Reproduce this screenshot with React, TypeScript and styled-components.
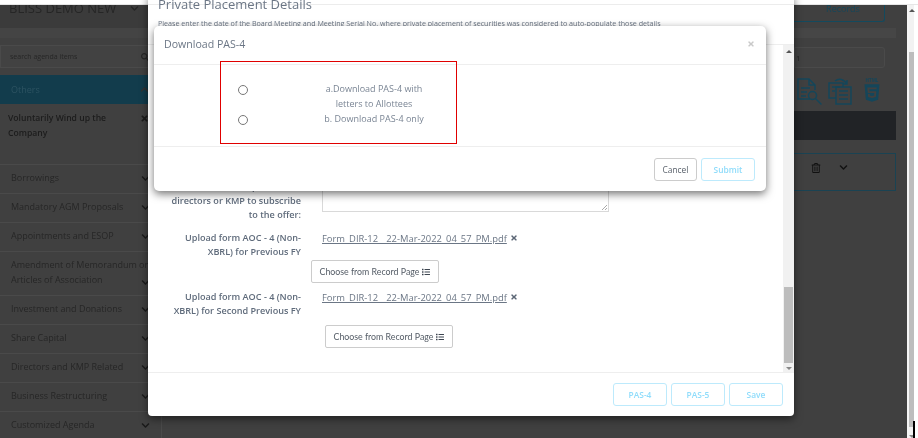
import React from "react";
import styled, { createGlobalStyle } from "styled-components";
import { FaChevronDown, FaChevronUp, FaTimes, FaSearch, FaList, FaRegTrashAlt, FaHtml5 } from "react-icons/fa";

const Global = createGlobalStyle`
  html, body { margin: 0; padding: 0; background: #fff; }
  * { box-sizing: border-box; }
  body { font-family: "Open Sans", "Liberation Sans", sans-serif; }
`;

const Page = styled.div`
  position: relative;
  width: 918px;
  height: 438px;
  overflow: hidden;
  display: flex;
  flex-direction: column;
  background: #fff;
  filter: blur(0.35px);
`;
const TopStrip = styled.div`
  height: 5px;
  flex: none;
  background: #fff;
  border-bottom: 1px solid #e6e6e6;
`;
const Desktop = styled.div`
  flex: 1;
  display: flex;
  min-height: 0;
`;
const Sidebar = styled.aside`
  width: 162px;
  flex: none;
  background: #404040;
  border-right: 1px solid #4a4a4a;
  display: flex;
  flex-direction: column;
  overflow: hidden;
`;
const Brand = styled.div`
  height: 23px;
  flex: none;
  background: #3b3b3b;
  display: flex;
  align-items: flex-start;
  gap: 14px;
  padding-left: 9px;
  color: #262626;
  font-size: 13px;
  line-height: 6px;
  svg { margin-top: -1px; }
`;
const Band = styled.div`
  height: 10px;
  flex: none;
  background: #444;
`;
const SearchBox = styled.div`
  height: 23px;
  margin-top: 7px;
  flex: none;
  display: flex;
  align-items: center;
  justify-content: space-between;
  padding: 0 11px 0 9px;
  background: #424242;
  border: 1px solid #4a4a4a;
  color: #262626;
  font-size: 7px;
`;
const ActiveItem = styled.div`
  margin-top: 7px;
  height: 29px;
  flex: none;
  display: flex;
  align-items: center;
  justify-content: space-between;
  padding: 0 12px 0 11px;
  background: #123c4c;
  color: #2c5261;
  font-size: 9px;
  svg { color: #333; }
`;
const SubItem = styled.div`
  height: 60px;
  flex: none;
  display: flex;
  justify-content: space-between;
  padding: 7px 12px 0 8px;
  color: #1c1c1c;
  font-size: 8.6px;
  font-weight: 600;
  line-height: 15px;
  span { width: 110px; }
  svg { margin-top: 3px; }
`;
const NavItem = styled.div<{ $tall?: boolean }>`
  height: ${(p) => (p.$tall ? 44 : 29)}px;
  flex: none;
  display: flex;
  align-items: ${(p) => (p.$tall ? "flex-end" : "center")};
  justify-content: space-between;
  padding: ${(p) => (p.$tall ? "0 11px 8px 11px" : "0 11px 1px")};
  border-top: 1px solid #4a4a4a;
  color: #262626;
  font-size: 9px;
  line-height: 14.5px;
  white-space: nowrap;
  svg { color: #1a1a1a; flex: none; }
`;
const NavLabel = styled.span`
  width: 125px;
  white-space: nowrap;
`;
const Content = styled.main`
  flex: 1;
  min-width: 0;
  background: #404040;
  display: flex;
  flex-direction: column;
  align-items: flex-end;
  padding-right: 11px;
`;
const RightColumn = styled.div`
  width: 102px;
  display: flex;
  flex-direction: column;
`;
const RecordsButton = styled.div`
  width: 91px;
  height: 17px;
  flex: none;
  border: 1px solid #134a5e;
  border-top: 0;
  border-left: 0;
  border-radius: 0 0 3px 0;
  color: #14465a;
  font-size: 9px;
  line-height: 8px;
  text-align: center;
  padding-left: 8px;
`;
const WideBand = styled.div`
  height: 10px;
  margin-top: 6px;
  background: #464646;
`;
const ValueInput = styled.div`
  width: 91px;
  height: 21px;
  margin-top: 9px;
  background: #424242;
  border: 1px solid #4a4a4a;
  border-radius: 0 3px 3px 0;
  color: #262626;
  font-size: 8px;
  line-height: 20px;
  padding-left: 1px;
`;
const IconRow = styled.div`
  height: 27px;
  margin-top: 10px;
  display: flex;
  gap: 5px;
  padding-left: 3px;
  color: #14465a;
`;
const Html5 = styled.div`
  display: flex;
  flex-direction: column;
  align-items: center;
  margin-left: 4px;
  width: 20px;
  font-size: 4.5px;
  font-weight: 700;
  line-height: 5px;
`;
const DarkBar = styled.div`
  height: 29px;
  margin-top: 6px;
  background: #212326;
`;
const ActionRow = styled.div`
  height: 38px;
  margin-top: 13px;
  border: 1px solid #1a4353;
  border-left: 0;
  display: flex;
  align-items: flex-start;
  padding: 9px 0 0 17px;
  gap: 18px;
  color: #111;
`;
const PageScroll = styled.div`
  width: 11px;
  flex: none;
  border-left: 2px solid #f5f5f5;
  border-right: 4px solid #fff;
  display: flex;
  flex-direction: column;
  align-items: center;
  background: #f2f2f2;
  padding-top: 4px;
`;
const PageThumb = styled.div`
  width: 5px;
  flex: 1;
  margin-top: 40px;
  margin-bottom: 4px;
  background: #bdbdbd;
`;
const CursorMark = styled.div`
  position: absolute;
  left: 913px;
  top: 421px;
  width: 2px;
  height: 17px;
  background: #000;
`;
const MainModal = styled.section`
  position: absolute;
  left: 148px;
  top: -6px;
  width: 646px;
  height: 422px;
  background: #fff;
  border-radius: 0 0 4px 4px;
  box-shadow: 0 3px 9px rgba(0, 0, 0, 0.5);
  display: flex;
  flex-direction: column;
`;
const MainHeader = styled.header`
  height: 51px;
  flex: none;
  padding: 0 0 0 10px;
  border-bottom: 1px solid #eee;
  background: linear-gradient(#ececec, #ececec) 0 10px / 100% 1px no-repeat;
`;
const MainTitle = styled.div`
  color: #6b7685;
  font-size: 13px;
  line-height: 20px;
`;
const Hint = styled.div`
  margin-top: 3px;
  color: #6b7685;
  font-size: 7.15px;
  line-height: 12px;
  white-space: nowrap;
`;
const MainBody = styled.div`
  flex: 1;
  min-height: 0;
  display: flex;
`;
const Form = styled.div`
  flex: 1;
  min-width: 0;
  display: flex;
  flex-direction: column;
  justify-content: flex-end;
  padding-bottom: 24px;
  overflow: hidden;
`;
const FormRow = styled.div<{ $gap: number }>`
  display: grid;
  grid-template-columns: 153px 1fr;
  column-gap: 21px;
  margin-top: ${(p) => p.$gap}px;
`;
const FieldLabel = styled.div`
  color: #5f6b7b;
  font-size: 9.1px;
  font-weight: 600;
  line-height: 14px;
  text-align: right;
  white-space: nowrap;
`;
const TextArea = styled.div`
  width: 287px;
  height: 80px;
  margin-top: -48px;
  border: 1px solid #d9d9d9;
  position: relative;
  &::after {
    content: "";
    position: absolute;
    right: 1px;
    bottom: 1px;
    width: 6px;
    height: 6px;
    background: linear-gradient(135deg, transparent 50%, #aaa 50%, #aaa 60%, transparent 60%, transparent 78%, #aaa 78%, #aaa 88%, transparent 88%);
  }
`;
const FileLine = styled.div`
  display: flex;
  align-items: center;
  gap: 3px;
  height: 14px;
  color: #6b7685;
  font-size: 9.4px;
  svg { color: #5b6675; }
`;
const FileLink = styled.span`
  text-decoration: underline;
  white-space: nowrap;
`;
const ChooseButton = styled.div<{ $shift: number; $top: number }>`
  display: flex;
  align-items: center;
  justify-content: center;
  gap: 3px;
  width: 128px;
  height: 23px;
  margin-left: ${(p) => p.$shift}px;
  margin-top: ${(p) => p.$top}px;
  background: #fff;
  border: 1px solid #ccc;
  border-radius: 2px;
  color: #545c66;
  font-family: Lato, "Open Sans", sans-serif;
  font-size: 8.8px;
  white-space: nowrap;
  svg { color: #3d4550; }
`;
const ScrollTrack = styled.div`
  width: 11px;
  flex: none;
  background: #f1f1f1;
  display: flex;
  flex-direction: column;
  align-items: center;
  padding: 5px 1px 2px;
`;
const ArrowUp = styled.i`
  width: 0;
  height: 0;
  flex: none;
  border: 3px solid transparent;
  border-top: 0;
  border-bottom: 3px solid #555;
`;
const ArrowDown = styled.i`
  width: 0;
  height: 0;
  flex: none;
  margin-top: 4px;
  border: 3px solid transparent;
  border-bottom: 0;
  border-top: 3px solid #888;
`;
const ScrollThumb = styled.div`
  width: 9px;
  height: 76px;
  margin-top: auto;
  background: #bdbdbd;
`;
const MainFooter = styled.footer`
  height: 44px;
  flex: none;
  border-top: 1px solid #eee;
  display: flex;
  justify-content: flex-end;
  align-items: center;
  gap: 4px;
  padding: 0 11px 1px 0;
`;
const InfoButton = styled.div<{ $w: number }>`
  width: ${(p) => p.$w}px;
  height: 23px;
  border: 1px solid #bdeafc;
  border-radius: 3px;
  background: #fff;
  color: #8fdcfb;
  font-size: 8.4px;
  font-weight: 600;
  line-height: 21px;
  text-align: center;
`;
const CancelButton = styled(InfoButton)`
  border-color: #ccc;
  color: #555d67;
  font-weight: 400;
`;
const Dialog = styled.section`
  position: absolute;
  left: 154px;
  top: 26px;
  width: 612px;
  height: 165px;
  background: #fff;
  border-radius: 5px;
  box-shadow: 0 3px 9px rgba(0, 0, 0, 0.55);
  display: flex;
  flex-direction: column;
`;
const DialogHeader = styled.header`
  height: 39px;
  flex: none;
  display: flex;
  align-items: center;
  justify-content: space-between;
  padding: 0 11px 2px 10px;
  border-bottom: 1px solid #eee;
  color: #6b7685;
  font-size: 10.6px;
  svg { color: #c9c9c9; }
`;
const DialogBody = styled.div`
  flex: 1;
  padding-left: 66px;
`;
const ChoicePanel = styled.div`
  position: relative;
  width: 237px;
  height: 83px;
  margin-top: -4px;
  padding: 20px 0 0 17px;
  border: 1px solid #e00000;
  display: grid;
  grid-template-columns: 10px 122px;
  column-gap: 65px;
  row-gap: 1px;
  align-content: start;
`;
const Radio = styled.input`
  appearance: none;
  width: 10px;
  height: 10px;
  margin: 3px 0 0;
  border: 1px solid #777;
  border-radius: 50%;
  background: #fff;
`;
const ChoiceText = styled.label`
  color: #7a8594;
  font-size: 9px;
  line-height: 14.5px;
  text-align: center;
`;
const DialogFooter = styled.footer`
  height: 45px;
  flex: none;
  border-top: 1px solid #eee;
  display: flex;
  justify-content: flex-end;
  align-items: center;
  gap: 4px;
  padding-right: 11px;
`;

const navTop = ["Borrowings", "Mandatory AGM Proposals", "Appointments and ESOP"];
const navBottom = ["Investment and Donations", "Share Capital", "Directors and KMP Related", "Business Restructuring", "Customized Agenda"];

const DocSearchIcon = () => (
  <svg width="26" height="27" viewBox="0 0 26 27" fill="none" stroke="currentColor" strokeWidth="1.5">
    <path d="M13 21H1V1h11l6 6v5" />
    <path d="M12 1v6h6M4 10h9M4 14h6M4 18h5" />
    <circle cx="15.5" cy="17.5" r="4" />
    <path d="M18.5 20.5l6 6" />
  </svg>
);
const CopyIcon = () => (
  <svg width="25" height="27" viewBox="0 0 25 27" fill="none" stroke="currentColor" strokeWidth="1.5">
    <path d="M8 20H1V5h14v4" />
    <path d="M8 9h15v17H8z" />
    <path d="M4 9h8M4 13h3M11 13h9M11 17h9M11 21h9" />
    <path d="M7 3c4-3 9-2 12 3M19 2v4h-4" />
  </svg>
);

export default function App() {
  return (
    <Page>
      <Global />
      <TopStrip />
      <Desktop>
        <Sidebar>
          <Brand>BLISS DEMO NEW <FaChevronDown size={9} /></Brand>
          <Band />
          <SearchBox>search agenda items <FaSearch size={8} /></SearchBox>
          <ActiveItem>Others <FaChevronUp size={9} /></ActiveItem>
          <SubItem><span>Voluntarily Wind up the Company</span><FaTimes size={9} /></SubItem>
          {navTop.map((t) => (
            <NavItem key={t}>{t}<FaChevronDown size={9} /></NavItem>
          ))}
          <NavItem $tall><NavLabel>Amendment of Memorandum or<br />Articles of Association</NavLabel><FaChevronDown size={9} /></NavItem>
          {navBottom.map((t) => (
            <NavItem key={t}>{t}<FaChevronDown size={9} /></NavItem>
          ))}
        </Sidebar>
        <Content>
          <RightColumn>
            <RecordsButton>Records</RecordsButton>
            <WideBand />
            <ValueInput>1</ValueInput>
            <IconRow>
              <DocSearchIcon />
              <CopyIcon />
              <Html5>HTML<FaHtml5 size={20} /></Html5>
            </IconRow>
            <DarkBar />
            <ActionRow>
              <FaRegTrashAlt size={10} />
              <FaChevronDown size={9} />
            </ActionRow>
          </RightColumn>
        </Content>
        <PageScroll>
          <ArrowUp />
          <PageThumb />
          <ArrowDown />
        </PageScroll>
      </Desktop>
      <CursorMark />

      <MainModal>
        <MainHeader>
          <MainTitle>Private Placement Details</MainTitle>
          <Hint>Please enter the date of the Board Meeting and Meeting Serial No. where private placement of securities was considered to auto-populate those details</Hint>
        </MainHeader>
        <MainBody>
          <Form>
            <FormRow $gap={0}>
              <FieldLabel>Intention of promoters,<br />directors or KMP to subscribe<br />to the offer:</FieldLabel>
              <TextArea />
            </FormRow>
            <FormRow $gap={9}>
              <FieldLabel>Upload form AOC - 4 (Non-<br />XBRL) for Previous FY</FieldLabel>
              <div>
                <FileLine><FileLink>Form_DIR-12__22-Mar-2022_04_57_PM.pdf</FileLink><FaTimes size={8} /></FileLine>
                <ChooseButton $shift={-11} $top={15}>Choose from Record Page <FaList size={8} /></ChooseButton>
              </div>
            </FormRow>
            <FormRow $gap={7}>
              <FieldLabel>Upload form AOC - 4 (Non-<br />XBRL) for Second Previous FY</FieldLabel>
              <div>
                <FileLine><FileLink>Form_DIR-12__22-Mar-2022_04_57_PM.pdf</FileLink><FaTimes size={8} /></FileLine>
                <ChooseButton $shift={3} $top={21}>Choose from Record Page <FaList size={8} /></ChooseButton>
              </div>
            </FormRow>
          </Form>
          <ScrollTrack>
            <ArrowUp />
            <ScrollThumb />
            <ArrowDown />
          </ScrollTrack>
        </MainBody>
        <MainFooter>
          <InfoButton $w={54}>PAS-4</InfoButton>
          <InfoButton $w={54}>PAS-5</InfoButton>
          <InfoButton $w={54}>Save</InfoButton>
        </MainFooter>
      </MainModal>

      <Dialog>
        <DialogHeader>Download PAS-4 <FaTimes size={8} /></DialogHeader>
        <DialogBody>
          <ChoicePanel>
            <Radio type="radio" name="pas" />
            <ChoiceText>a.Download PAS-4 with letters to Allottees</ChoiceText>
            <Radio type="radio" name="pas" />
            <ChoiceText>b. Download PAS-4 only</ChoiceText>
          </ChoicePanel>
        </DialogBody>
        <DialogFooter>
          <CancelButton $w={43}>Cancel</CancelButton>
          <InfoButton $w={54}>Submit</InfoButton>
        </DialogFooter>
      </Dialog>
    </Page>
  );
}
